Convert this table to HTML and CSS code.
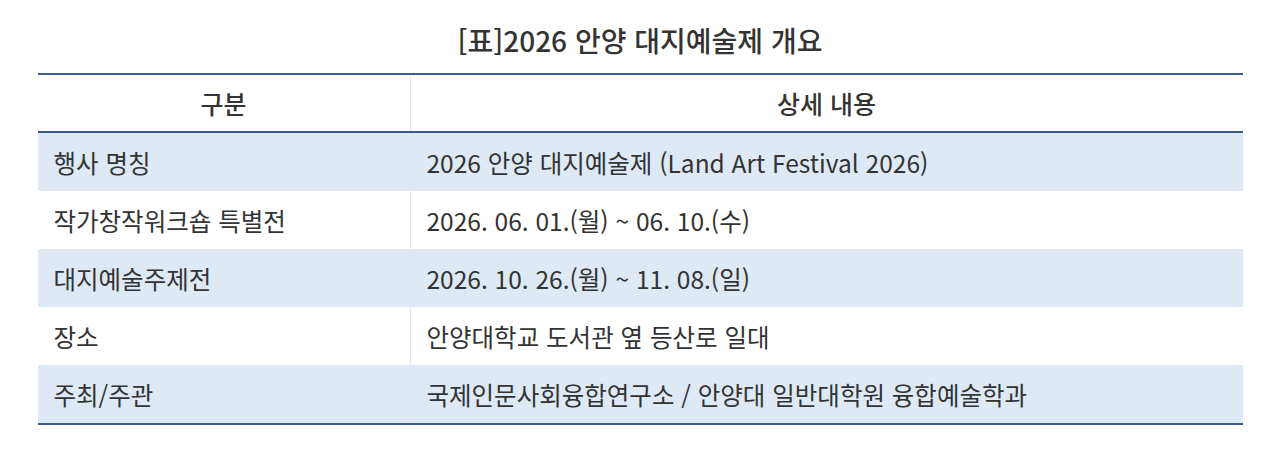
FILE: index.html
```html
<!DOCTYPE html>
<html lang="ko">
<head>
<meta charset="utf-8">
<link rel="stylesheet" href="styles.css">
</head>
<body>
<div class="page">
  <h1 class="title">[표]2026 안양 대지예술제 개요</h1>
  <table class="info">
    <thead>
      <tr><th class="c1">구분</th><th class="c2">상세 내용</th></tr>
    </thead>
    <tbody>
      <tr class="alt"><td class="c1">행사 명칭</td><td class="c2">2026 안양 대지예술제 (Land Art Festival 2026)</td></tr>
      <tr><td class="c1">작가창작워크숍 특별전</td><td class="c2">2026. 06. 01.(월) ~ 06. 10.(수)</td></tr>
      <tr class="alt"><td class="c1">대지예술주제전</td><td class="c2">2026. 10. 26.(월) ~ 11. 08.(일)</td></tr>
      <tr><td class="c1">장소</td><td class="c2">안양대학교 도서관 옆 등산로 일대</td></tr>
      <tr class="alt"><td class="c1">주최/주관</td><td class="c2">국제인문사회융합연구소 / 안양대 일반대학원 융합예술학과</td></tr>
    </tbody>
  </table>
</div>
</body>
</html>
```
FILE: styles.css
```css
html, body {
  margin: 0;
  padding: 0;
  background: #ffffff;
}
body {
  font-family: "Noto Sans CJK KR", sans-serif;
  color: #333333;
}
.page {
  width: 1205px;
  margin: 0 auto;
  padding-top: 21px;
}
.title {
  margin: 0 0 14px 0;
  text-align: center;
  font-size: 28px;
  line-height: 38px;
  font-weight: 500;
  color: #333333;
}
.info {
  width: 100%;
  border-collapse: collapse;
  border-top: 2px solid #3d5a8c;
  border-bottom: 2px solid #3d5a8c;
}
.info th {
  height: 56px;
  padding: 0;
  font-size: 25px;
  font-weight: 500;
  text-align: center;
  border-bottom: 2px solid #3d5a8c;
}
.info td {
  height: 58px;
  padding: 0 0 0 16px;
  font-size: 24.5px;
  font-weight: 400;
  text-align: left;
}
.info .c1 {
  width: 356px;
}
.info th.c1, .info td.c1 {
  border-right: 1px solid #e3e7ee;
}
.info tr.alt td {
  background: #dde9f5;
}
```
